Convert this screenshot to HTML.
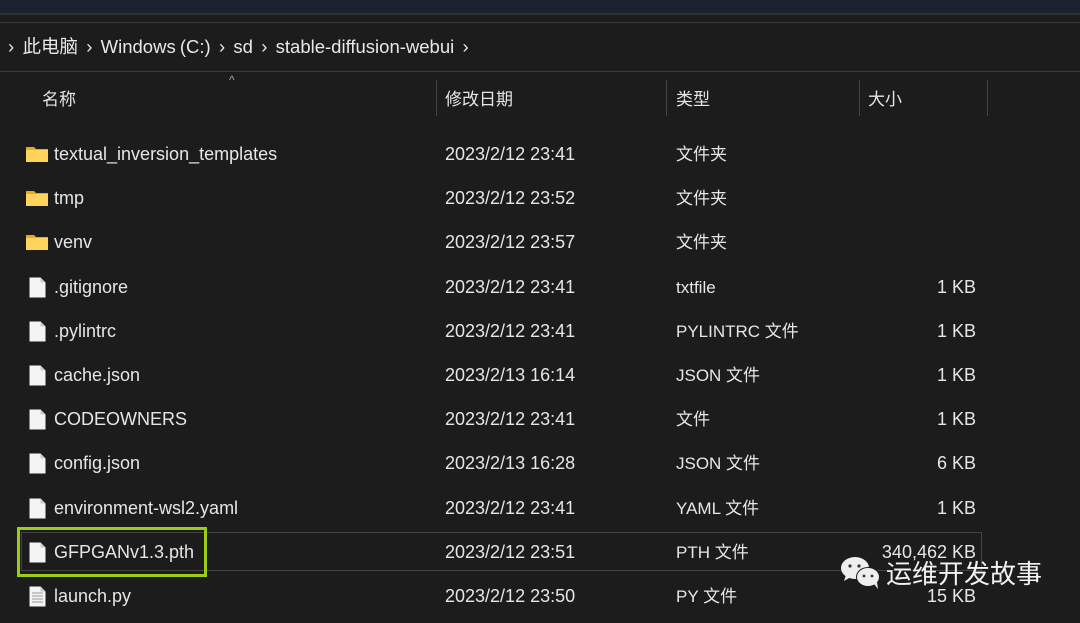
<!DOCTYPE html>
<html><head><meta charset="utf-8"><style>
*{margin:0;padding:0;box-sizing:border-box}
body{width:1080px;height:623px;overflow:hidden;background:#1c1c1c;font-family:"Liberation Sans","Noto Sans CJK SC",sans-serif;color:#e6e6e6;position:relative}
.a{position:absolute;white-space:nowrap;line-height:22px}
.row{position:absolute;left:0;width:1080px;height:44px;font-size:18px}
.row span{position:absolute;top:11px;line-height:22px;height:22px;white-space:nowrap}
.n{left:54px}.d{left:445px}.row span.t{left:676px;font-size:17px;top:12px}.s{right:104px}
.hd{position:absolute;top:80px;width:1px;height:36px;background:#444}
</style></head><body>
<div class="a" style="left:0;top:0;width:1080px;height:13px;background:#1a2130"></div>
<div class="a" style="left:0;top:13px;width:1080px;height:2px;background:#303236"></div>
<div class="a" style="left:0;top:22px;width:1080px;height:1px;background:#3a3a3a"></div>
<div class="a" style="left:0;top:71px;width:1080px;height:1px;background:#3a3a3a"></div>
<div class="a" style="left:8px;top:36px;font-size:18.5px;color:#e8e8e8;word-spacing:-1px">›&nbsp; 此电脑 &nbsp;›&nbsp; Windows (C:) &nbsp;›&nbsp; sd &nbsp;›&nbsp; stable-diffusion-webui &nbsp;›</div>
<div class="a" style="left:229px;top:74px;font-size:12px;color:#aaa;line-height:12px">^</div>
<div class="a" style="left:42px;top:89px;font-size:17px">名称</div>
<div class="a" style="left:445px;top:89px;font-size:17px">修改日期</div>
<div class="a" style="left:676px;top:89px;font-size:17px">类型</div>
<div class="a" style="left:868px;top:89px;font-size:17px">大小</div>
<div class="hd" style="left:436px"></div><div class="hd" style="left:666px"></div><div class="hd" style="left:859px"></div><div class="hd" style="left:987px"></div>
<div class="a" style="left:21px;top:532px;width:961px;height:39px;border:1px solid #444"></div>
<div class="a" style="left:17px;top:527px;width:190px;height:50px;border:3px solid #9acd14"></div>
<div id="rows"></div>
<script>
var R=[["f","textual_inversion_templates","2023/2/12 23:41","文件夹",""],
["f","tmp","2023/2/12 23:52","文件夹",""],
["f","venv","2023/2/12 23:57","文件夹",""],
["d",".gitignore","2023/2/12 23:41","txtfile","1 KB"],
["d",".pylintrc","2023/2/12 23:41","PYLINTRC 文件","1 KB"],
["d","cache.json","2023/2/13 16:14","JSON 文件","1 KB"],
["d","CODEOWNERS","2023/2/12 23:41","文件","1 KB"],
["d","config.json","2023/2/13 16:28","JSON 文件","6 KB"],
["d","environment-wsl2.yaml","2023/2/12 23:41","YAML 文件","1 KB"],
["d","GFPGANv1.3.pth","2023/2/12 23:51","PTH 文件","340,462 KB"],
["p","launch.py","2023/2/12 23:50","PY 文件","15 KB"]];
var h="";
R.forEach(function(r,i){var y=132+i*44.2;var ic;
if(r[0]=="f")ic='<svg style="position:absolute;left:26px;top:13px" width="22" height="17"><path d="M0 2h8l2 2h12v13H0z" fill="#e8a820"/><path d="M0 5h22v12H0z" fill="#ffd35c"/></svg>';
else ic='<svg style="position:absolute;left:29px;top:12px" width="17" height="21"><path d="M0.5 0.5h11l5 5v15h-16z" fill="#f4f4f4"/><path d="M11.5 0.5v5h5" fill="#ccc"/>'+(r[0]=="p"?'<path d="M3 7h11M3 10h11M3 13h11M3 16h11" stroke="#999"/>':'')+'</svg>';
h+='<div class="row" style="top:'+y+'px">'+ic+'<span class="n">'+r[1]+'</span><span class="d">'+r[2]+'</span><span class="t">'+r[3]+'</span><span class="s">'+r[4]+'</span></div>';});
document.getElementById("rows").innerHTML=h;
</script>
<svg class="a" style="left:840px;top:555px" width="42" height="36"><ellipse cx="15" cy="13" rx="14" ry="11" fill="#eee"/><path d="M6 20l-2 6 7-4z" fill="#eee"/><ellipse cx="28" cy="22" rx="12" ry="10" fill="#1c1c1c"/><ellipse cx="28" cy="22" rx="11" ry="9" fill="#eee"/><path d="M34 29l4 5-1-7z" fill="#eee"/><circle cx="10" cy="11" r="1.6" fill="#333"/><circle cx="19" cy="11" r="1.6" fill="#333"/><circle cx="24" cy="21" r="1.4" fill="#333"/><circle cx="32" cy="21" r="1.4" fill="#333"/></svg>
<div class="a" style="left:886px;top:559px;font-size:26px;line-height:30px;color:#f2f2f2">运维开发故事</div>
</body></html>
